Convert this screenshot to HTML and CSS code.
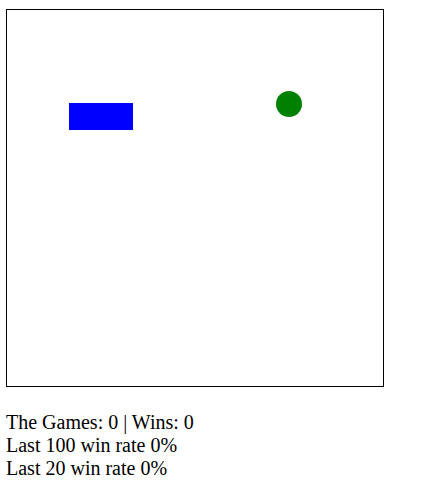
FILE: index.html
```html
<!DOCTYPE html>
<html>
<head>
<meta charset="utf-8">
<link rel="stylesheet" href="styles.css">
</head>
<body>
<div class="page">
  <div class="board">
    <div class="paddle"></div>
    <div class="ball"></div>
  </div>
  <div class="stats">
    <div>The Games: 0 | Wins: 0</div>
    <div>Last 100 win rate 0%</div>
    <div>Last 20 win rate 0%</div>
  </div>
</div>
</body>
</html>
```
FILE: styles.css
```css
html, body {
  margin: 0;
  background: #fff;
}
.page {
  padding: 9px 0 0 6px;
  font-family: "Liberation Serif", "Times New Roman", serif;
  font-size: 20px;
  line-height: 23px;
  color: #000;
}
.board {
  position: relative;
  width: 376px;
  height: 376px;
  border: 1px solid #000;
}
.paddle {
  position: absolute;
  left: 62px;
  top: 93px;
  width: 64px;
  height: 27px;
  background: #0000ff;
}
.ball {
  position: absolute;
  left: 269px;
  top: 81px;
  width: 26px;
  height: 26px;
  border-radius: 50%;
  background: #008000;
}
.stats {
  margin-top: 24px;
}
```
